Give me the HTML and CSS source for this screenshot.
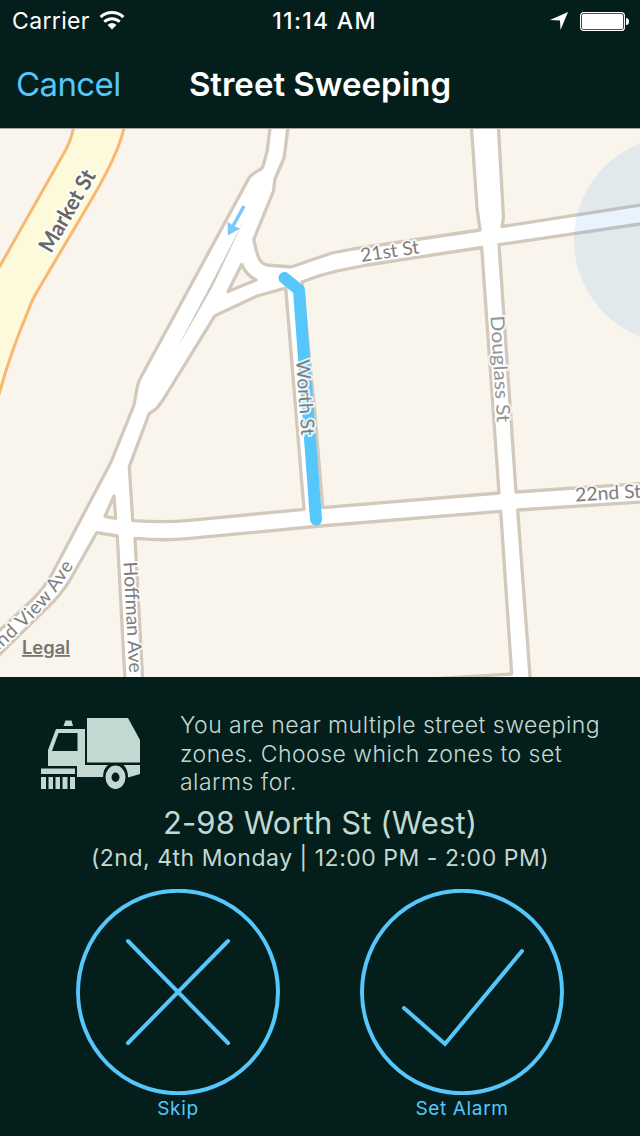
FILE: index.html
```html
<!DOCTYPE html>
<html lang="en">
<head>
<meta charset="utf-8">
<title>Street Sweeping</title>
<link rel="stylesheet" href="styles.css">
</head>
<body>
<div class="app">
  <header class="header">
    <div class="status">
      <div class="status-left">
        <span class="carrier">Carrier</span>
        <svg class="wifi" width="26" height="20" viewBox="0 0 26 20">
          <path d="M1.600 6.100A16.500 16.500 0 0 1 24.400 6.100M5.300 10.800A11 11 0 0 1 20.700 10.800" fill="none" stroke="#fff" stroke-width="3"/>
          <path d="M13 18.500L8.500 14Q13 10.200 17.500 14Z" fill="#fff"/>
        </svg>
      </div>
      <span class="time">11:14 AM</span>
      <div class="status-right">
        <svg width="18" height="18" viewBox="0 0 18 18"><path d="M18 0L10.500 18L10 8.500L0 8Z" fill="#fff"/></svg>
        <svg width="49" height="19" viewBox="0 0 49 19">
          <rect x=".6" y=".6" width="43.800" height="17.800" rx="3" fill="none" stroke="#fff" stroke-width="1.200"/>
          <rect x="2" y="2" width="41" height="15" rx="1.500" fill="#fff"/>
          <path d="M46 6Q49 6 49 9.500Q49 13 46 13Z" fill="#fff"/>
        </svg>
      </div>
    </div>
    <nav class="nav">
      <a class="cancel">Cancel</a>
      <h1 class="title">Street Sweeping</h1>
    </nav>
  </header>

  <svg class="map" width="640" height="549" viewBox="0 128 640 549">
    <rect y="128" width="640" height="549" fill="#fff"/>
    <g class="block">
      <path d="M-10 100H270V128L267 152L263 166Q262 169 259 170L253 174Q251 175 249 178L141 377Q138 382 137 388L134 405L111 462L52 574Q44 588 32 600L0 630L-10 638Z"/>
      <path d="M288 120V128L284 158L275 179L273.500 191L254 239Q254 243 258 256Q261 264 267 265L291 267L320 257L332 253L353 249L480 230L477 208L471 120Z"/>
      <path d="M498 120L503.500 218L502 226.500L650 203.500V120Z"/>
      <path d="M302 282L320 275.500L337 271L367 265L481.700 247.500L499 493L322.700 507.700L315 415Z"/>
      <path d="M499 244.700L650 222.500V483L516 492Z"/>
      <path d="M215 315.700L257 296L285.700 288L304 509.300L187 520.700Q165 522.500 132.700 520.700L129.300 466.700L149 414L157 408L163 400Z"/>
      <path d="M241.700 264.500Q246 275 256 280L228 291.500Z"/>
      <path d="M114 496L115.700 518.500L105 516.300Z"/>
      <path d="M96.700 532.700L117.300 536L125.500 690H-10V663L0 654L55 600Q66 588 75 571Z"/>
      <path d="M135 538.300Q165 541 187 538.700L320 526L500.700 511.300L511.700 674L430 679V690H143.200Z"/>
      <path d="M517.700 510L650 501.500V690H531Z"/>
    </g>
    <path d="M245 218L211 284L176 350L197 314L213 286Z" fill="#d3c8bc"/>
    <path class="market" d="M75 120L73.500 128Q71 142 61.700 157L-8 280V415L0 391Q10 354 28.500 310Q31 302 38 290L90 202Q108 172 117.700 148Q122 137 124 128L126 120Z"/>
    <circle cx="677.500" cy="240" r="103.500" fill="#1987f5" fill-opacity=".1"/>
    <g fill="#78c8fc" stroke="#78c8fc">
      <path d="M244 206L233 226" stroke-width="3.500"/>
      <path d="M228 235.500L227.500 221.500L232.500 225.500L240 228.500Z" stroke="none"/>
    </g>
    <path d="M284.500 278L299 290L316 519.500" fill="none" stroke="#55c7fb" stroke-width="12" stroke-linecap="round" stroke-linejoin="round"/>
    <defs>
      <path id="view-ave" d="M-60 702L4 646Q44 610 57 591L74 565"/>
    </defs>
    <g class="label">
      <text class="label-market" transform="translate(51 254) rotate(-60)" textLength="91" lengthAdjust="spacingAndGlyphs">Market St</text>
      <text transform="translate(361.500 262) rotate(-8.500)" textLength="59" lengthAdjust="spacingAndGlyphs">21st St</text>
      <text transform="translate(575.500 501.500) rotate(-3.500)" textLength="66" lengthAdjust="spacingAndGlyphs">22nd St</text>
      <text class="label-light" transform="translate(490.500 316) rotate(86.500)" textLength="107" lengthAdjust="spacingAndGlyphs">Douglass St</text>
      <text transform="translate(296 360) rotate(86)" textLength="76" lengthAdjust="spacingAndGlyphs">Worth St</text>
      <text transform="translate(123.500 562) rotate(87)" textLength="111" lengthAdjust="spacingAndGlyphs">Hoffman Ave</text>
      <text class="label-view" text-anchor="end"><textPath href="#view-ave" startOffset="100%">Grand View Ave</textPath></text>
    </g>
    <text class="legal" x="22" y="654" textLength="48" lengthAdjust="spacingAndGlyphs">Legal</text>
    <rect y="128" width="640" height="1" fill="#aaa39e"/>
  </svg>

  <main class="panel">
    <div class="notice">
      <svg class="truck" width="100" height="72" viewBox="41 717 100 72">
        <g fill="#c3d8d0">
          <path d="M65.500 720.500H71.500L73 726H63.500Z"/>
          <path d="M87 718H128L140 740V762.500H87Z"/>
          <path fill-rule="evenodd" d="M56 729H85V765H108Q103 769 103 777H77V766H48V750ZM58.500 733L52 751H77.500V733Z"/>
          <path d="M123.500 765H140V774L128 777.500Q128 769 123.500 765Z"/>
          <path fill-rule="evenodd" d="M115.500 765.500A10 11.700 0 1 1 115.500 788.900A10 11.700 0 1 1 115.500 765.500ZM115.500 772.500A4 4.700 0 1 0 115.500 781.900A4 4.700 0 1 0 115.500 772.500Z"/>
          <path d="M41 768.500H75V774H41ZM41 777H46V789H41ZM48.500 777H53V789H48.500ZM55.500 777H60V789H55.500ZM62.500 777H67.500V789H62.500ZM70 777H75V789H70Z"/>
        </g>
      </svg>
      <p class="message">You are near multiple street sweeping<br>zones. Choose which zones to set<br>alarms for.</p>
    </div>
    <h2 class="zone">2-98 Worth St (West)</h2>
    <p class="schedule">(2nd, 4th Monday | 12:00 PM - 2:00 PM)</p>
    <div class="actions">
      <div class="action">
        <svg width="206" height="206" viewBox="0 0 206 206"><ellipse cx="103" cy="103" rx="100" ry="101.200"/><path d="M53 52L153 154M153 52L53 154"/></svg>
        <span>Skip</span>
      </div>
      <div class="action">
        <svg width="206" height="206" viewBox="0 0 206 206"><ellipse cx="103" cy="103" rx="100" ry="101.200"/><path d="M45 119L86 155L163 62"/></svg>
        <span>Set Alarm</span>
      </div>
    </div>
  </main>
</div>
</body>
</html>
```
FILE: styles.css
```css
* { box-sizing: border-box; margin: 0; padding: 0; }
body { background: #041e1b; font-family: Inter, "Liberation Sans", sans-serif; }
svg { display: block; }
.app { display: flex; flex-direction: column; width: 640px; height: 1136px; overflow: hidden; background: #041e1b; }
.header { height: 128px; color: #fff; }
.status { display: grid; grid-template-columns: 1fr auto 1fr; align-items: center; height: 42px; padding: 0 11px 0 12px; }
.status-left { display: flex; align-items: center; gap: 9px; }
.carrier { font-size: 23px; letter-spacing: .35px; }
.time { padding-left: 8px; font-size: 23px; font-weight: 500; letter-spacing: 1.3px; }
.status-right { display: flex; align-items: center; justify-content: flex-end; gap: 12px; }
.nav { display: grid; grid-template-columns: 1fr auto 1fr; align-items: center; height: 84px; padding: 0 16px; }
.cancel { color: #55c7fb; font-size: 33px; letter-spacing: -.6px; }
.title { font-size: 33px; font-weight: 600; }
.map { flex: none; overflow: hidden; }
.block path { fill: #f9f4ec; stroke: #d3c8bc; stroke-width: 3.3; stroke-linejoin: round; }
.market { fill: #fcfadb; stroke: #f8b872; stroke-width: 3; }
.label text { font-family: Lato, "Open Sans", sans-serif; font-size: 19px; fill: #7d7d7d; stroke: #fff; stroke-opacity: .8; stroke-width: 4px; stroke-linejoin: round; paint-order: stroke; }
.label .label-market { font-size: 22px; font-weight: 700; fill: #666; }
.label .label-light { fill: #939393; }
.label .label-view { letter-spacing: .6px; }
.legal { font-size: 18px; font-weight: 600; fill: #777570; text-decoration: underline; }
.panel { display: flex; flex-direction: column; align-items: center; height: 459px; color: #c3d8d0; }
.notice { display: flex; align-self: stretch; gap: 39px; height: 125px; padding: 34px 0 0 41px; }
.truck { flex: none; margin-top: 6px; }
.message { font-size: 23px; font-weight: 300; line-height: 28.6px; letter-spacing: .47px; white-space: nowrap; }
.zone { height: 42px; font-size: 31px; font-weight: 400; line-height: 42px; letter-spacing: .1px; white-space: nowrap; }
.schedule { height: 28px; font-size: 23px; line-height: 28px; letter-spacing: .52px; white-space: nowrap; }
.actions { display: flex; gap: 78px; padding-top: 17px; }
.action { display: flex; flex-direction: column; align-items: center; width: 206px; color: #55c7fb; font-size: 19px; line-height: 24px; }
.action svg { flex: none; margin-bottom: 2px; }
.action ellipse, .action path { fill: none; stroke: currentColor; stroke-width: 4; stroke-linecap: round; }
.action span { letter-spacing: .65px; }
```
